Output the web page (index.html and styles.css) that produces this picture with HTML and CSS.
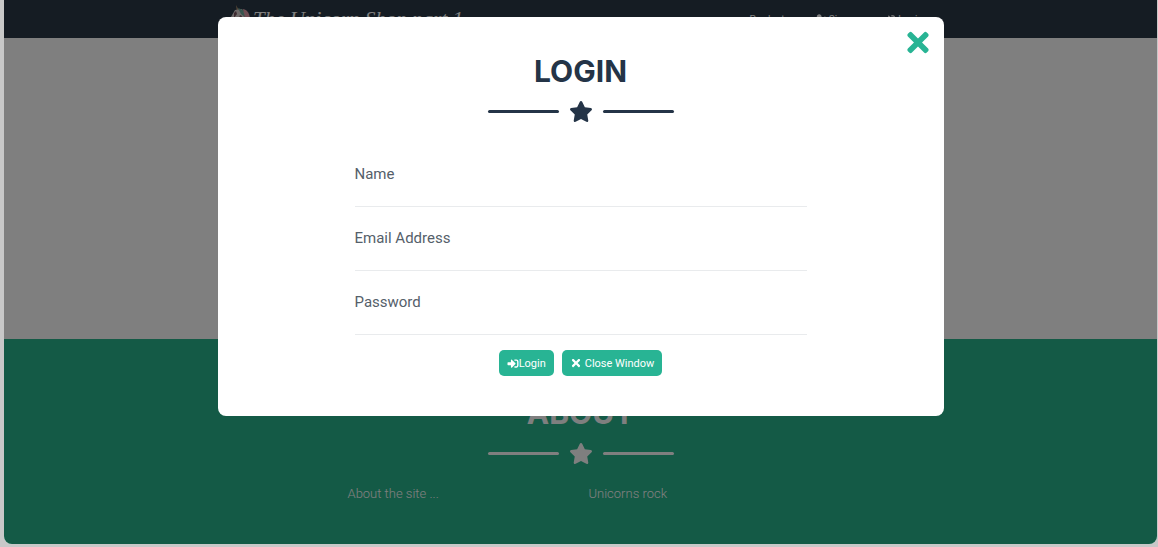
FILE: index.html
```html
<!DOCTYPE html>
<html lang="en">
<head>
<meta charset="utf-8">
<meta name="viewport" content="width=device-width, initial-scale=1">
<title>Login</title>
<link rel="stylesheet" href="styles.css">
</head>
<body>
<svg class="sprite" aria-hidden="true">
  <symbol id="star" viewBox="0 0 576 512"><path d="M259.300 17.800L194 150.200 47.900 171.500c-26.200 3.800-36.700 36.100-17.700 54.600l105.700 103-25 145.500c-4.500 26.300 23.200 46 46.400 33.700L288 439.600l130.700 68.700c23.200 12.200 50.900-7.400 46.400-33.700l-25-145.500 105.700-103c19-18.500 8.500-50.800-17.700-54.600L382 150.200 316.700 17.800c-11.700-23.600-45.600-23.900-57.400 0z"/></symbol>
  <symbol id="times" viewBox="0 0 352 512"><path d="M242.720 256l100.070-100.070c12.280-12.280 12.280-32.190 0-44.480l-22.240-22.240c-12.280-12.280-32.190-12.280-44.480 0L176 189.280 75.930 89.210c-12.280-12.280-32.190-12.280-44.480 0L9.210 111.450c-12.280 12.280-12.280 32.190 0 44.480L109.280 256 9.210 356.070c-12.280 12.280-12.280 32.190 0 44.480l22.240 22.240c12.280 12.280 32.200 12.280 44.480 0L176 322.720l100.070 100.070c12.280 12.280 32.200 12.280 44.480 0l22.240-22.240c12.280-12.280 12.280-32.190 0-44.480L242.720 256z"/></symbol>
  <symbol id="signin" viewBox="0 0 512 512"><path d="M416 448h-84c-6.600 0-12-5.400-12-12v-40c0-6.600 5.400-12 12-12h84c17.700 0 32-14.300 32-32V160c0-17.700-14.300-32-32-32h-84c-6.600 0-12-5.400-12-12V76c0-6.600 5.400-12 12-12h84c53 0 96 43 96 96v192c0 53-43 96-96 96zm-47-201L201 79c-15-15-41-4.500-41 17v96H24c-13.300 0-24 10.700-24 24v96c0 13.300 10.700 24 24 24h136v96c0 21.500 26 32 41 17l168-168c9.300-9.400 9.300-24.600 0-34z"/></symbol>
  <symbol id="userplus" viewBox="0 0 640 512"><path d="M624 208h-64v-64c0-8.800-7.200-16-16-16h-32c-8.800 0-16 7.200-16 16v64h-64c-8.800 0-16 7.200-16 16v32c0 8.800 7.200 16 16 16h64v64c0 8.800 7.200 16 16 16h32c8.800 0 16-7.200 16-16v-64h64c8.800 0 16-7.200 16-16v-32c0-8.800-7.200-16-16-16zM224 256c70.700 0 128-57.300 128-128S294.700 0 224 0 96 57.300 96 128s57.300 128 128 128zm90 32c-30 21-150 21-180 0C60 288 0 348 0 422v42c0 26.500 21.500 48 48 48h352c26.500 0 48-21.500 48-48v-42c0-74-60-134-134-134z"/></symbol>
</svg>

<div class="page">
  <header class="navbar">
    <nav class="nav-inner">
      <a class="brand" href="#">
        <svg class="unicorn" viewBox="0 0 20 28" aria-hidden="true">
          <path fill="#a58a6a" d="M6 0l4 7-3 1z"/>
          <path fill="#ddd2d2" d="M1 12l4-7 7-1 5 8-2 16H4L0 22z"/>
          <path fill="#de9aa6" d="M13 4c5 1 7 5 7 12l-2 8-4-8z"/>
          <path fill="#6fa99a" d="M8 3l5 2 2 7-4-3z"/>
          <path fill="#7b5560" d="M4 8l2-2 1 3-3 4zM10 10l2 1-1 4-2-2z"/>
        </svg>
        <span>The Unicorn Shop part 1</span>
      </a>
      <div class="nav-links">
        <a href="#">Products</a>
        <a href="#"><svg class="nav-icon"><use href="#userplus"/></svg>Signup</a>
        <a href="#"><svg class="nav-icon"><use href="#signin"/></svg>Login</a>
      </div>
    </nav>
  </header>
  <main class="main">
    <section class="products"></section>
    <section class="about">
      <h2 class="title">ABOUT</h2>
      <div class="divider"><span class="rule"></span><svg class="star"><use href="#star"/></svg><span class="rule"></span></div>
      <div class="about-columns"><p>About the site ...</p><p>Unicorns rock</p></div>
    </section>
  </main>
  <div class="backdrop"></div>
</div>

<div class="modal">
  <div class="dialog" role="dialog" aria-modal="true" aria-labelledby="login-title">
    <button class="close" type="button" aria-label="Close"><svg class="close-icon"><use href="#times"/></svg></button>
    <h2 class="title" id="login-title">LOGIN</h2>
    <div class="divider"><span class="rule"></span><svg class="star"><use href="#star"/></svg><span class="rule"></span></div>
    <form class="form">
      <div class="field"><label for="name">Name</label><input id="name" type="text"></div>
      <div class="field"><label for="email">Email Address</label><input id="email" type="email"></div>
      <div class="field"><label for="password">Password</label><input id="password" type="password"></div>
      <div class="actions">
        <button class="btn" type="submit"><svg class="signin-icon"><use href="#signin"/></svg>Login</button>
        <button class="btn btn-close" type="button"><svg class="times-icon"><use href="#times"/></svg>Close Window</button>
      </div>
    </form>
  </div>
</div>
</body>
</html>
```
FILE: styles.css
```css
* { box-sizing: border-box; }

body {
  margin: 0;
  padding: 0 1px 3px 4px;
  background: #c8c8c8;
  color: #243447;
  font-family: Roboto, "Liberation Sans", sans-serif;
}

h2, p { margin: 0; }
a { color: inherit; text-decoration: none; }
svg { fill: currentColor; flex: none; }
.sprite { display: none; }

.page {
  position: relative;
  display: flex;
  flex-direction: column;
  min-height: calc(100vh - 3px);
  overflow: hidden;
  border-radius: 0 0 8px 8px;
  background: #fff;
}

.navbar {
  height: 38px;
  padding: 0 226px;
  background: #2a3846;
  color: #fff;
}

.nav-inner { display: flex; justify-content: space-between; height: 38px; align-items: center; }
.brand {
  display: flex;
  align-items: center;
  gap: 3px;
  font-family: "Liberation Serif", serif;
  font-size: 21px;
  font-style: italic;
  line-height: 22px;
  white-space: nowrap;
}
.unicorn { width: 20px; height: 28px; }
.nav-links { display: flex; gap: 25px; padding-right: 8px; font-size: 10px; }
.nav-links a { display: flex; align-items: center; gap: 2px; }
.nav-icon { width: 12px; height: 10px; }

.main { display: flex; flex: 1; flex-direction: column; }
.products { height: 301px; }
.about { flex: 1; padding: 56px 16px 32px; background: #28b48c; color: #fff; }
.about-columns {
  display: grid;
  grid-template-columns: 1fr 1fr;
  max-width: 484px;
  margin: 18px auto 0;
  padding-left: 9px;
  column-gap: 7px;
  font-size: 13px;
  font-weight: 300;
  line-height: 22px;
}

.backdrop { position: absolute; inset: 0; background: rgba(0, 0, 0, 0.5); }

.title { font-family: Inter, "Liberation Sans", sans-serif; font-size: 30px; font-weight: 700; line-height: 36px; text-align: center; }
.divider { display: flex; align-items: center; justify-content: center; gap: 10px; height: 24px; margin-top: 10px; }
.rule { width: 71px; height: 3px; border-radius: 2px; background: currentColor; }
.star { width: 24px; height: 21px; }

.modal { position: fixed; inset: 0; display: flex; align-items: flex-start; justify-content: center; padding: 17px 16px 0 19px; }
.dialog {
  position: relative;
  width: 100%;
  max-width: 726px;
  padding: 36px 16px 40px;
  border-radius: 8px;
  background: #fff;
}
.close { position: absolute; top: 10px; right: 11px; padding: 0; border: 0; background: none; color: #28b494; cursor: pointer; }
.close-icon { display: block; width: 30px; height: 31px; }

.form { max-width: 452px; margin: 20px auto 0; }
.field { display: flex; flex-direction: column; padding-top: 19px; }
.field label { color: #55606a; font-size: 15px; line-height: 24px; }
.field input {
  width: 100%;
  height: 21px;
  padding: 0;
  border: 0;
  border-bottom: 1px solid #e9ebed;
  outline: 0;
  background: transparent;
  font: inherit;
}
.actions { display: flex; justify-content: center; gap: 8px; margin-top: 15px; }
.btn {
  display: flex;
  align-items: center;
  height: 26px;
  padding: 0 8px;
  border: 0;
  border-radius: 5px;
  background: #28b494;
  color: #fff;
  font-family: inherit;
  font-size: 11px;
  cursor: pointer;
}
.signin-icon { width: 12px; height: 11px; }
.btn-close { gap: 3px; }
.times-icon { width: 12px; height: 12px; }
```
